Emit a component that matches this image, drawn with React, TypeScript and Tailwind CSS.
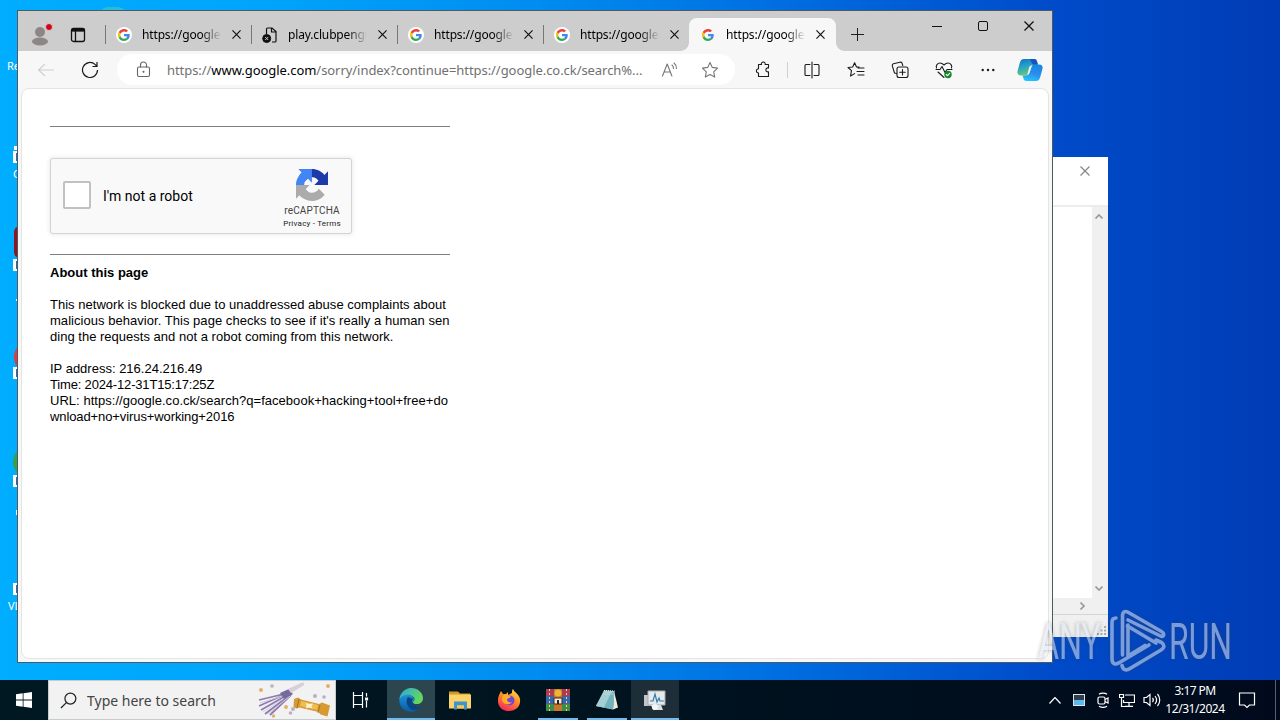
import React from "react";

const UI = "font-['Noto_Sans',sans-serif]";

function GoogleG({ halo }: { halo?: boolean }) {
  return (
    <span className={"flex size-4 items-center justify-center rounded-full " + (halo ? "bg-white" : "")}>
      <svg viewBox="0 0 48 48" className="size-3">
        <path fill="#ea4335" d="M24 9.5c3.5 0 6.700 1.200 9.200 3.600l6.900-6.900C35.900 2.400 30.500 0 24 0 14.600 0 6.500 5.400 2.600 13.200l8 6.200C12.400 13.700 17.700 9.500 24 9.500z" />
        <path fill="#4285f4" d="M47 24.500c0-1.600-.2-3.100-.4-4.500H24v9h12.900c-.6 3-2.300 5.500-4.800 7.200l7.700 6C44.400 38 47 31.800 47 24.500z" />
        <path fill="#fbbc05" d="M10.500 28.600A14.500 14.500 0 0 1 9.800 24c0-1.600.3-3.100.7-4.600l-8-6.200A24 24 0 0 0 0 24c0 3.900.9 7.500 2.600 10.800z" />
        <path fill="#34a853" d="M24 48c6.500 0 11.900-2.100 15.900-5.800l-7.700-6c-2.200 1.400-4.900 2.300-8.200 2.300-6.300 0-11.600-4.200-13.500-9.900l-8 6.200C6.500 42.600 14.600 48 24 48z" />
      </svg>
    </span>
  );
}

function BlockedPage() {
  return (
    <svg viewBox="0 0 16 16" className="size-4" fill="none" stroke="#111">
      <path strokeWidth="1.200" d="M4.500 7V2c0-.6.4-1 1-1H10L14 4.500v9.500c0 .6-.4 1-1 1h-3M9.500 1.200v3.800H14" />
      <circle cx="4.700" cy="11.500" r="4" fill="#111" />
      <path stroke="#ccc" d="m3.200 10 3 3m0-3-3 3" />
    </svg>
  );
}

function Cross({ size = "size-[9px]", color = "#111" }: { size?: string; color?: string }) {
  return (
    <svg viewBox="0 0 10 10" className={size} fill="none" stroke={color} strokeWidth="1.3">
      <path d="m.5.5 9 9m0-9-9 9" />
    </svg>
  );
}

function Tab({ title, icon, active }: { title: string; icon: React.ReactNode; active?: boolean }) {
  return (
    <div
      className={
        "relative flex h-full shrink-0 items-center pl-[11px] " +
        (active ? "w-[147px] rounded-t-lg bg-[#f7f7f7]" : "w-[146px]")
      }
    >
      {!active && <span className="absolute left-0 top-[7px] h-[19px] w-px bg-[#777]" />}
      <span className="shrink-0">{icon}</span>
      <span className="ml-[10px] w-[78px] whitespace-nowrap text-[12px] leading-4 tracking-[-0.150px] text-black [mask-image:linear-gradient(90deg,#000_76%,transparent_102%)]">
        {title}
      </span>
      <span className="ml-[12px]"><Cross /></span>
      {active && (
        <>
          <span className="absolute -left-2 bottom-0 size-2 bg-[radial-gradient(circle_at_0_0,#cdcdcd_7.500px,#f7f7f7_8px)]" />
          <span className="absolute -right-2 bottom-0 size-2 bg-[radial-gradient(circle_at_100%_0,#cdcdcd_7.500px,#f7f7f7_8px)]" />
        </>
      )}
    </div>
  );
}

function TabStrip() {
  return (
    <div className="flex h-10 shrink-0 items-start bg-[#cdcdcd] pt-[7px]">
      <div className="flex h-[33px] w-[87px] items-center pl-[13px]">
        <svg viewBox="0 0 20 20" className="mt-[2px] size-5">
          <circle cx="9" cy="6" r="5" fill="#8b8785" />
          <ellipse cx="9" cy="15.500" rx="8" ry="4" fill="#8b8785" />
        </svg>
        <span className="-ml-[6px] -mt-[16px] size-2 rounded-full border border-[#cdcdcd] bg-[#d80018]" />
        <svg viewBox="0 0 16 16" className="ml-[17px] size-4" fill="none" stroke="#111" strokeWidth="1.300">
          <rect x="1.500" y="1.500" width="13" height="13" rx="2" />
          <path d="M1.500 3.500h13M5.500 4v10" strokeWidth="1.300" />
          <path d="M1.500 3h13" strokeWidth="3" />
        </svg>
      </div>
      <div className="flex h-[33px]">
        <Tab title="https://google." icon={<GoogleG halo />} />
        <Tab title="play.clubpengu" icon={<BlockedPage />} />
        <Tab title="https://google." icon={<GoogleG halo />} />
        <Tab title="https://google." icon={<GoogleG halo />} />
        <Tab title="https://google." icon={<GoogleG />} active />
      </div>
      <svg viewBox="0 0 14 14" className="ml-[15px] mt-[10px] size-[13px]" stroke="#111">
        <path d="M7 0v14M0 7h14" />
      </svg>
      <div className="ml-auto flex h-4 items-center pr-[18px]">
        <span className="h-px w-[10px] bg-[#111]" />
        <span className="ml-[36px] size-[10px] rounded-[2px] border border-[#111]" />
        <span className="ml-[36px]"><Cross size="size-[10px]" /></span>
      </div>
    </div>
  );
}

function ToolIcon({ children, className }: { children: React.ReactNode; className?: string }) {
  return (
    <svg
      viewBox="0 0 18 18"
      className={"size-[18px] shrink-0 " + (className ?? "")}
      fill="none"
      stroke="#1b1b1b"
      strokeWidth="1.100"
      strokeLinecap="round"
      strokeLinejoin="round"
    >
      {children}
    </svg>
  );
}

function Toolbar() {
  return (
    <div className="flex h-[37px] shrink-0 items-center bg-[#f7f7f7] pl-[19px]">
      <svg viewBox="0 0 18 18" className="size-[18px]" fill="none" stroke="#cfcfcf" strokeWidth="1.100">
        <path d="M17 9H1.500M8 3 1.500 9 8 15" />
      </svg>
      <svg viewBox="0 0 18 18" className="ml-[26px] size-[18px]" fill="none" stroke="#1b1b1b" strokeWidth="1.200">
        <path d="M16.500 9A7.500 7.500 0 1 1 14 3.400L16 5.200M16 1v4.500h-4.500" />
      </svg>
      <div className="ml-[18px] flex h-[31px] w-[618px] items-center rounded-full bg-white pl-[17px]">
        <ToolIcon className="[stroke:#666]">
          <rect x="3.500" y="6" width="12" height="9.500" rx="1.500" />
          <path d="M6.500 6V4a3 3 0 0 1 6 0v2" />
          <circle cx="9.500" cy="10.800" r=".5" fill="#666" />
        </ToolIcon>
        <span className="ml-[15px] w-[480px] whitespace-nowrap text-[13px] leading-5 tracking-[-0.055px] text-[#707070]">
          https://<span className="text-black">www.google.com</span>/sorry/index?continue=https://google.co.ck/search%...
        </span>
        <ToolIcon className="ml-[14px] [stroke:#777]">
          <path d="m1.500 15 4.700-12 4.700 12M3 11h6.500M11 4c1 .8 1.500 2 1.500 3.500M13 2c1.600 1.300 2.500 3.200 2.500 5.500" />
        </ToolIcon>
        <ToolIcon className="ml-[22px] [stroke:#777]">
          <path d="m9 1.500 2.300 4.900 5.300.7-3.900 3.700 1 5.300L9 13.500l-4.700 2.600 1-5.300-3.900-3.700 5.300-.7z" />
        </ToolIcon>
      </div>
      <ToolIcon className="ml-[19px]">
        <path d="M4.500 3.500h3a1.900 1.900 0 1 1 3.600 0h3.400V7a2 2 0 1 0 0 3.800v4.700H4.500V12a2.100 2.100 0 1 1 0-4.200z" />
      </ToolIcon>
      <span className="ml-[15px] h-4 w-px bg-[#d0d0d0]" />
      <ToolIcon className="ml-[15px]">
        <path d="M7 3.500H3a1 1 0 0 0-1 1v9a1 1 0 0 0 1 1h4M11 3.500h4a1 1 0 0 1 1 1v9a1 1 0 0 1-1 1h-4M9 1v16" />
      </ToolIcon>
      <ToolIcon className="ml-[26px]">
        <path d="M12 6H9.500L7.600 1.700 5.700 6l-4.700.5 3.500 3.200-1 5.300 4.100-2.400M11 7h6M10 10.500h7M11 14h6" />
      </ToolIcon>
      <ToolIcon className="ml-[26px]">
        <rect x="6" y="6" width="11" height="10.500" rx="2" />
        <path d="M11.500 8.500v5.500M8.700 11.200h5.600M5.500 12.500 3.500 12 1.300 4.800c-.2-1 .2-1.800 1-2L9 1.200c1-.2 1.600.1 2 .9l.8 2.400" />
      </ToolIcon>
      <ToolIcon className="ml-[26px]">
        <path d="M1.500 7C.5 4.500 2.500 2 5 2c2 0 3 1 4 2 1-1 2-2 4-2 2.500 0 4.500 2.500 3.500 5M1 8.500h4l2-3 3 6 2-3h5M3 11l6 5.500" />
        <circle cx="13" cy="13.500" r="3.700" fill="#14862b" stroke="none" />
        <path d="m11.300 13.500 1.200 1.200 2.200-2.300" stroke="#fff" />
      </ToolIcon>
      <svg viewBox="0 0 18 18" className="ml-[26px] size-[18px]" fill="#1b1b1b">
        <circle cx="3.700" cy="9" r="1.200" /><circle cx="9" cy="9" r="1.200" /><circle cx="14.300" cy="9" r="1.200" />
      </svg>
      <svg viewBox="0 0 26 24" className="ml-5 h-6 w-[26px]">
        <defs>
          <linearGradient id="cp1" x1="0" y1="0" x2=".3" y2="1">
            <stop offset="0" stopColor="#1272c8" /><stop offset=".55" stopColor="#2ba6c4" /><stop offset="1" stopColor="#63cb72" />
          </linearGradient>
          <linearGradient id="cp2" x1=".6" y1="0" x2=".3" y2="1">
            <stop offset="0" stopColor="#1687e6" /><stop offset=".5" stopColor="#2b8bea" /><stop offset="1" stopColor="#23c6ff" />
          </linearGradient>
        </defs>
        <path fill="url(#cp1)" d="M7 1h10c2 0 2.700 1.300 3.200 3l.7 3h-4c-1.700 0-2.400 1-3 2.700l-2 6C11.300 17 10 17.500 8 17.500H4c-3 0-4.200-2-3.300-5l2.200-8C3.600 2 5 1 7 1z" />
        <path fill="url(#cp2)" d="M19 23H9.500c-2 0-2.700-1.200-3.200-3l-.7-2.600H9c2 0 2.900-.8 3.500-2.700l2-6C15.100 7 16 6.500 18 6.500h4c3 0 4.200 2 3.300 5l-2.200 8C22.400 22 21 23 19 23z" />
        <path fill="#1554c4" d="M13 1h4c2 0 2.700 1.300 3.200 3l.7 2.500H17C15.300 6.500 14.500 5 14 3.500z" />
        <path fill="#f7f7f7" d="m12.500 8.500 2.500-1.500-2.500 7.500c-.4 1.300-1 2-2.300 2.500z" />
      </svg>
    </div>
  );
}

function Captcha() {
  return (
    <div className="flex h-[76px] w-[302px] rounded-[3px] border border-[#d3d3d3] bg-[#f9f9f9] shadow-[0_0_4px_1px_rgba(0,0,0,0.08)]">
      <div className="ml-3 mt-[22px] size-7 rounded-[2px] border-2 border-[#c1c1c1] bg-white" />
      <div className="ml-3 mt-[28px] w-[170px] font-[Roboto,sans-serif] text-[14px] leading-[18px] text-black">I'm not a robot</div>
      <div className="ml-[9px] flex w-[60px] flex-col items-center pt-[10px] font-[Roboto,sans-serif] text-[#444]">
        <svg viewBox="0 0 64 64" className="size-8 shrink-0">
          <path fill="#1c3aa9" d="M64 31.955l-.033-1.370V4.687l-7.160 7.160C50.948 4.674 42.033.093 32.050.093c-10.400 0-19.622 4.960-25.458 12.640l11.736 11.860a15.550 15.550 0 0 1 4.754-5.334c2.050-1.600 4.952-2.906 8.968-2.906.485 0 .860.057 1.135.163 4.976.393 9.288 3.140 11.828 7.124l-8.307 8.307L64 31.953" />
          <path fill="#4285f4" d="M31.862.094l-1.370.033H4.594l7.160 7.160C4.580 13.147 0 22.060 0 32.046c0 10.400 4.960 19.622 12.640 25.458L24.500 45.768a15.550 15.550 0 0 1-5.334-4.754c-1.600-2.050-2.906-4.952-2.906-8.968 0-.485.057-.860.163-1.135.393-4.976 3.140-9.288 7.124-11.828l8.307 8.307L31.860.095" />
          <path fill="#ababab" d="M.001 32.045l.033 1.370v25.898l7.160-7.160c5.860 7.173 14.774 11.754 24.760 11.754 10.400 0 19.622-4.960 25.458-12.640l-11.736-11.860a15.550 15.550 0 0 1-4.754 5.334c-2.050 1.600-4.952 2.906-8.968 2.906-.485 0-.860-.057-1.135-.163-4.976-.393-9.288-3.140-11.828-7.124l8.307-8.307c-10.522.040-22.400.066-27.295-.005" />
        </svg>
        <div className="mt-[4px] whitespace-nowrap text-[10px] leading-[12px] tracking-[0.150px]">reCAPTCHA</div>
        <div className="mt-[2px] whitespace-nowrap text-[8px] leading-[10px] tracking-[0.220px] text-[#222]">Privacy - Terms</div>
      </div>
    </div>
  );
}

function Browser() {
  return (
    <div className="absolute left-[17px] top-[10px] flex h-[653px] w-[1036px] flex-col border border-[#4d5a63] bg-[#f7f7f7]">
      <TabStrip />
      <Toolbar />
      <div className="mx-[3px] mb-[3px] flex-1 rounded-lg border border-[#e6e4e2] bg-white pl-[28px] pt-[37px] font-['Liberation_Sans',Arial,sans-serif] text-[13px] leading-4 text-black">
        <div className="h-px w-[400px] bg-[#808080]" />
        <div className="mt-[31px]"><Captcha /></div>
        <div className="mt-5 h-px w-[400px] bg-[#808080]" />
        <div className="mt-[10px] font-bold">About this page</div>
        <div className="mt-4 whitespace-nowrap">
          <p className="tracking-[0.020px]">This network is blocked due to unaddressed abuse complaints about</p>
          <p className="tracking-[0.040px]">malicious behavior. This page checks to see if it's really a human sen</p>
          <p className="tracking-[0.015px]">ding the requests and not a robot coming from this network.</p>
        </div>
        <div className="mt-4 whitespace-nowrap">
          <p>IP address: 216.24.216.49</p>
          <p className="tracking-[-0.170px]">Time: 2024-12-31T15:17:25Z</p>
          <p className="tracking-[0.035px]">URL: https://google.co.ck/search?q=facebook+hacking+tool+free+do</p>
          <p className="tracking-[-0.100px]">wnload+no+virus+working+2016</p>
        </div>
      </div>
    </div>
  );
}

function BackWindow() {
  return (
    <div className="absolute left-[1000px] top-[157px] flex h-[480px] w-[108px] flex-col bg-white">
      <div className="flex h-[50px] justify-end border-b-2 border-[#ececec] pr-[18px] pt-[9px]">
        <Cross size="size-[10px]" color="#888" />
      </div>
      <div className="flex flex-1 justify-end">
        <div className="flex w-4 flex-col items-center justify-between bg-[#f0f0f0] py-[7px] pr-[2px]">
          <svg viewBox="0 0 8 5" className="h-[5px] w-2" fill="none" stroke="#999" strokeWidth="1.600"><path d="m.5 4.500 3.500-3.500 3.500 3.500" /></svg>
          <svg viewBox="0 0 8 5" className="h-[5px] w-2" fill="none" stroke="#999" strokeWidth="1.600"><path d="m.5.5 3.500 3.500L7.500.5" /></svg>
        </div>
      </div>
      <div className="flex h-4 items-center justify-end bg-[#f0f0f0] pr-[23px]">
        <svg viewBox="0 0 5 8" className="h-2 w-[5px]" fill="none" stroke="#999" strokeWidth="1.600"><path d="M.5.5 4 4 .5 7.500" /></svg>
      </div>
      <div className="flex h-[23px] items-end justify-end border-t border-[#d5d5d5] bg-[#f0f0f0] p-[2px]">
        <svg viewBox="0 0 9 9" className="size-[9px]" fill="#aaa">
          <path d="M7 0h2v2H7zM3.500 3.500h2v2h-2zM7 3.500h2v2H7zM0 7h2v2H0zM3.500 7h2v2h-2zM7 7h2v2H7z" />
        </svg>
      </div>
    </div>
  );
}

function Shortcut() {
  return <span className="block h-[12px] w-[6px] border-2 border-r-0 border-white bg-[linear-gradient(90deg,#fff_1px,#2b6ab0_1px)]" />;
}

function DesktopIcons() {
  return (
    <>
      <span className="absolute left-[7px] top-[58px] text-[11px] leading-4 text-white">Re</span>
      <span className="absolute left-[97px] top-[7px] h-6 w-8 rounded-full bg-[#27bcd8]" />
      <span className="absolute left-[14px] top-[146px] h-1 w-2 bg-white" />
      <span className="absolute left-[13px] top-[151px]"><Shortcut /></span>
      <span className="absolute left-[13px] top-[166px] text-[11px] leading-4 text-white">C</span>
      <span className="absolute left-[14px] top-[226px] h-8 w-8 rounded-md bg-[#8e1620]" />
      <span className="absolute left-[13px] top-[259px]"><Shortcut /></span>
      <span className="absolute left-[16px] top-[299px] size-[2px] bg-white" />
      <span className="absolute left-[14px] top-[341px] size-8 rounded-full bg-[#e43a3c]" />
      <span className="absolute left-[13px] top-[367px]"><Shortcut /></span>
      <span className="absolute left-[13px] top-[446px] size-8 rounded-full bg-[#35a04d]" />
      <span className="absolute left-[13px] top-[475px]"><Shortcut /></span>
      <span className="absolute left-[16px] top-[510px] h-[5px] w-px bg-white" />
      <span className="absolute left-[13px] top-[583px]"><Shortcut /></span>
      <span className="absolute left-[8px] top-[598px] text-[11px] leading-4 text-white">VL</span>
    </>
  );
}

function Watermark() {
  return (
    <svg
      viewBox="0 0 200 66"
      className="absolute left-[1036px] top-[608px] h-[66px] w-[200px] opacity-55 drop-shadow-[0_0_2px_rgba(60,60,60,0.7)]"
      fontFamily="Roboto, sans-serif"
      fontSize="50.500"
      fill="#dfe6f2"
    >
      <text x="2" y="51" textLength="63" lengthAdjust="spacingAndGlyphs">ANY</text>
      <text x="133" y="51" textLength="63" lengthAdjust="spacingAndGlyphs">RUN</text>
      <g fill="none" stroke="#dfe6f2" strokeWidth="3.600" strokeLinejoin="round" strokeLinecap="round">
        <path d="M80 10c-3.500 0-4 2-4 4.500V51c0 5.500 4 6 7.500 3.500L113 37" />
        <path d="m91.500 18 28.500 17" />
        <path d="M86.500 47V8c0-4.500 2.500-5.500 6-3.500l33 19c3.500 2 2.500 6-1 4.500L92 12" />
        <path d="M86 57.500c1 4.500 4 5.500 8 3l31-18.500c4-2.500 3.500-5.500.5-7.500l-5.500-2.500" />
        <path d="M92 48V17M92 48l17-10.500" />
      </g>
    </svg>
  );
}

function SearchArt() {
  return (
    <svg viewBox="0 0 74 38" className="h-[38px] w-[74px]">
      <g stroke="#8b7cae" strokeWidth="1.800" fill="none">
        <path d="M30 12 1 19M30 12 1 25M31 13 3 29M32 14 7 33M33 14 12 34" />
        <path stroke="#d6cbe2" strokeWidth="1" d="M30 13 2 22M31 14 5 31M32 15 10 33" />
      </g>
      <path fill="#77699c" d="m22 12 9-4 4 5-9 5z" />
      <path fill="#d9cfd9" d="m30 8 14-6.500c2-.5 3 1.500 1.500 3L33 12z" />
      <path fill="#d79a32" d="m36 18 4-1.500 3 2 18 4.500 3-1.500 8 3-2.500 11-7-2-2-2.500-19-4.500-3 1-3-1.500z" />
      <path fill="#efbd55" d="m43 20 17 4-1 5-17-4z" />
      <path fill="#fff3cf" d="m48 22 3 1 4-.5-1.500 3 1 2-3.500-1-3 1 .5-3z" />
      <path stroke="#a87424" d="m41 18-2 9m23-3-2 8" />
      <g fill="#e0b16b"><circle cx="3" cy="9" r="2" /><circle cx="70" cy="5" r="2" /><circle cx="28" cy="26" r="2" /><circle cx="15.500" cy="35" r="1.700" /></g>
      <g fill="#b9b0c6"><circle cx="14" cy="5" r="1.800" /><circle cx="57" cy="15" r="2" /><circle cx="66" cy="16" r="1.800" /><circle cx="35" cy="28" r="2" /><circle cx="32.500" cy="32" r="1.800" /></g>
    </svg>
  );
}

function AppSlot({ children, lit, bar }: { children: React.ReactNode; lit?: string; bar?: string }) {
  return (
    <div className={"flex h-10 w-12 shrink-0 flex-col items-center justify-between pt-2 " + (lit ?? "")}>
      <svg viewBox="0 0 24 24" className="size-6">{children}</svg>
      <span className={"h-[2px] bg-[#76b9ed] " + (bar ?? "w-0")} />
    </div>
  );
}

function Taskbar() {
  return (
    <div className="absolute bottom-0 left-0 flex h-10 w-full items-center bg-[linear-gradient(90deg,#001822,#00131f_50%,#000a1c)]">
      <div className="flex w-12 shrink-0 justify-center">
        <svg viewBox="0 0 16 16" className="size-4" fill="#fff">
          <path d="M0 2.200 6.700 1.300v6.200H0zM7.500 1.200 16 0v7.500H7.500zM0 8.400h6.700v6.300L0 13.800zM7.500 8.400H16V16l-8.500-1.200z" />
        </svg>
      </div>
      <div className="flex h-10 w-[288px] shrink-0 items-center border border-[#c6cbce] bg-[#f2f2f2] pl-[11px]">
        <svg viewBox="0 0 18 18" className="size-[17px]" fill="none" stroke="#222" strokeWidth="1.300">
          <circle cx="11" cy="7" r="5.800" /><path d="M7 11 1 17" />
        </svg>
        <span className="ml-[10px] mt-px w-[171px] whitespace-nowrap text-[14px] leading-5 text-[#444]">Type here to search</span>
        <SearchArt />
      </div>
      <div className="flex w-[51px] shrink-0 pl-[15px]">
        <svg viewBox="0 0 18 18" className="size-[18px]" fill="none" stroke="#fff" strokeWidth="1.200">
          <path d="M2.500 1v3.500h9V1M2.500 17v-3.500h9V17M2.500 4.500v9M11.500 4.500v9M15.500 2v3.500M15.500 10v6.500" />
          <path fill="#fff" d="M14.700 7h1.800v1.800h-1.800z" />
        </svg>
      </div>
      <AppSlot lit="bg-[#2c464f]" bar="w-12">
        <defs>
          <linearGradient id="e1" x1="0" y1="0" x2="1" y2=".5"><stop stopColor="#2aa8df" /><stop offset="1" stopColor="#65d85b" /></linearGradient>
          <linearGradient id="e2" x1="0" y1="0" x2="0" y2="1"><stop stopColor="#1b93dc" /><stop offset="1" stopColor="#0c5aa6" /></linearGradient>
        </defs>
        <path fill="url(#e2)" d="M.5 10c3-5 11-5 14 0 1 2 .5 4-1 5 1 3 4 4 8 3-3 5-9 7-14 5-5-2-8-7-7-13z" />
        <path fill="#0b4482" d="M9 9c-3 4-1 10 4 13 4 .5 7-1 9-4-4 1-7 0-8-3-2-1-1-3 0-4z" />
        <path fill="url(#e1)" d="M.5 11C1 5 6 0 12 0c7 0 12 5 12 10 0 4-3 6-6 6-2 0-4-.5-4-1.500 0-.8 1.500-1.500 1.500-3.500C15 7 5 4 .5 11z" />
      </AppSlot>
      <span className="w-px" />
      <AppSlot>
        <path fill="#d69a24" d="M1 3.500h9l2 2h10v4H1z" />
        <path fill="#fbd36b" d="M1 6.500h22v14H1z" />
        <path fill="#3d94d0" d="M6 13.500h13v8h-3v-4H9v4H6z" />
        <path fill="#f6c64e" d="M9 17.500h7v3H9z" />
      </AppSlot>
      <span className="w-px" />
      <AppSlot>
        <defs><linearGradient id="f1" x1=".8" y1="0" x2=".3" y2="1"><stop stopColor="#ffe14a" /><stop offset=".45" stopColor="#ff8d23" /><stop offset="1" stopColor="#f5265c" /></linearGradient></defs>
        <path fill="url(#f1)" d="M3 5l1-2 2 3h3l2-2v3l4-2c0-2 0-3 1-4 1 3 6 5 7 10 1 7-4 12-11 12S.5 18 1 12c0-3 1-5 2-7z" />
        <circle cx="12.500" cy="12.500" r="5" fill="#7644d6" />
        <path fill="#ffad28" d="M7 7c3-1 5 0 7 2l-4 2c0 3 3 4 5 3-2 3-7 3-9 0s-1-5 1-7z" />
      </AppSlot>
      <span className="w-px" />
      <AppSlot bar="w-10">
        <path fill="#b03a50" d="M0 1h24v7H0z" /><path fill="#3966a8" d="M0 8h24v8H0z" /><path fill="#3d8d47" d="M0 16h24v7H0z" />
        <path stroke="#f1cf98" strokeWidth="1" strokeDasharray="2 2" d="M3.500 1v22M20.500 1v22" />
        <path fill="#c7772d" d="M8 1h8v22H8z" />
        <circle cx="12" cy="5" r="3.500" fill="#f0b530" />
        <path fill="#f5ead5" stroke="#41291d" d="M8 10h8v6H8z" /><path fill="#222" d="M11 12h2v4h-2z" />
      </AppSlot>
      <span className="w-px" />
      <AppSlot bar="w-10">
        <path fill="#efe9dc" d="m19 3 4 16.500-5 2z" />
        <path fill="#8fc0c6" d="M9 2.500 19.500 3 18 21.500 1 18z" />
        <path fill="#6fb3bb" d="M7.500 7h11L18 21.500 1 18z" />
        <path fill="#b9dadd" d="m9 2.500 8 .5-8 16.500L1 18z" opacity=".7" />
        <path fill="none" stroke="#e7f5f5" strokeDasharray="1 1" d="m9 2.500 10.500.5" />
      </AppSlot>
      <AppSlot lit="bg-[#1e2e38]" bar="w-12">
        <path fill="#c1c7c9" d="M1 7h8v11H1z" />
        <path fill="#e5e9eb" stroke="#a2aaad" d="M5 3h17v14H5z" />
        <path fill="none" stroke="#357eab" strokeWidth="1.200" d="M7 13h3l2-7 2 8 2-4 1 3h4" />
        <path fill="#dcdfe1" d="M8 17h10l2 5H10z" /><circle cx="12" cy="19" r="3" fill="#f5f5f5" />
      </AppSlot>
      <div className="ml-auto flex items-center text-white">
        <svg viewBox="0 0 12 7" className="h-[7px] w-3" fill="none" stroke="#fff" strokeWidth="1.200"><path d="m.5 6.500 5.500-6 5.500 6" /></svg>
        <svg viewBox="0 0 12 14" className="ml-3 h-[14px] w-3"><path fill="#d6e7ee" d="M0 1h12v12H0z" /><path fill="#333d46" d="M1 2h10v5H1z" /><path fill="#58baf0" d="M1 7h10v5H1z" /></svg>
        <svg viewBox="0 0 16 16" className="ml-[10px] size-4" fill="none" stroke="#fff" strokeWidth="1.200">
          <rect x="3" y="5" width="7" height="7" rx="1.500" /><path d="m10 7.500 3-1.500v5l-3-1.500M4 2.200c2-1.500 6-1.500 8 0M4 14.300c2 1.500 6 1.500 8 0" />
        </svg>
        <svg viewBox="0 0 16 16" className="ml-2 size-4" fill="none" stroke="#fff" strokeWidth="1.200">
          <path d="M6 3h9.500v7.500H4.500V8M10 10.500V14M6 14.400h8M.5 2.500h4v3h-4zM2.500 5.500v9H6" />
        </svg>
        <svg viewBox="0 0 18 16" className="ml-2 h-4 w-[18px]" fill="none" stroke="#fff" strokeWidth="1.200">
          <path d="M1 5.500h2.500L7 2.500v11l-3.500-3H1zM9.500 6c1 1.200 1 2.800 0 4M12 4c2 2.500 2 5.500 0 8M14.500 2c3 3.500 3 8.500 0 12" />
        </svg>
        <div className="ml-[4px] w-[60px] whitespace-nowrap text-center text-[12px] leading-[18px] tracking-[-0.600px]">
          <div>3:17 PM</div>
          <div className="tracking-[-0.450px]">12/31/2024</div>
        </div>
        <svg viewBox="0 0 18 18" className="ml-[13px] size-[18px]" fill="none" stroke="#fff" strokeWidth="1.200">
          <path d="M1.500 2h15v12h-5L9 16.500 6.500 14h-5z" />
        </svg>
        <span className="ml-[19px] h-10 w-px bg-[#566272]" />
        <span className="w-1" />
      </div>
    </div>
  );
}

export default function App() {
  return (
    <div className={"relative h-[720px] w-[1280px] overflow-hidden bg-[linear-gradient(90deg,#00adff_0%,#00a5fb_20%,#008cf0_42%,#006ce0_62%,#004bca_82%,#003cb4_100%)] " + UI}>
      <DesktopIcons />
      <BackWindow />
      <Browser />
      <Watermark />
      <Taskbar />
    </div>
  );
}
